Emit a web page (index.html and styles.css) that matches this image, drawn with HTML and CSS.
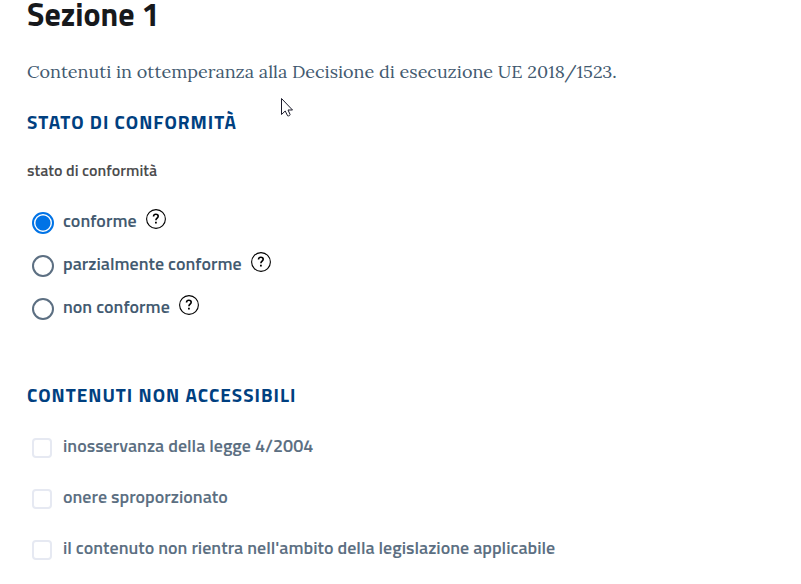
FILE: index.html
```html
<!DOCTYPE html>
<html lang="it">
<head>
<meta charset="utf-8">
<meta name="viewport" content="width=device-width, initial-scale=1">
<title>Sezione 1</title>
<link rel="stylesheet" href="styles.css">
</head>
<body>
<svg class="icon-defs" aria-hidden="true">
  <symbol id="help" viewBox="0 0 20 20">
    <circle cx="10" cy="10" r="9.400" fill="none" stroke="#000" stroke-width="1.100"/>
    <path d="M7.500 7.500C7.600 6 8.500 5.300 9.800 5.300c1.400 0 2.400.8 2.400 2 0 1.800-2.300 1.900-2.300 4" fill="none" stroke="#000" stroke-width="1.600"/>
    <path d="M9 12.700h1.800v1.800H9z"/>
  </symbol>
</svg>
<main class="section">
  <h1 class="title">Sezione 1</h1>
  <p class="intro">Contenuti in ottemperanza alla Decisione di esecuzione UE 2018/1523.</p>
  <h2 class="heading">Stato di conformità</h2>
  <fieldset class="group">
    <legend class="legend">stato di conformità</legend>
    <div class="option">
      <input class="radio" type="radio" name="stato" id="conforme" checked>
      <label for="conforme">conforme</label>
      <button class="help" type="button" aria-label="Aiuto"><svg><use href="#help"/></svg></button>
    </div>
    <div class="option">
      <input class="radio" type="radio" name="stato" id="parziale">
      <label for="parziale">parzialmente conforme</label>
      <button class="help" type="button" aria-label="Aiuto"><svg><use href="#help"/></svg></button>
    </div>
    <div class="option">
      <input class="radio" type="radio" name="stato" id="non-conforme">
      <label for="non-conforme">non conforme</label>
      <button class="help" type="button" aria-label="Aiuto"><svg><use href="#help"/></svg></button>
    </div>
  </fieldset>
  <h2 class="heading heading-spaced">Contenuti non accessibili</h2>
  <div class="checks">
    <div class="option option-disabled">
      <input class="checkbox" type="checkbox" id="inosservanza" disabled>
      <label for="inosservanza">inosservanza della legge 4/2004</label>
    </div>
    <div class="option option-disabled">
      <input class="checkbox" type="checkbox" id="onere" disabled>
      <label for="onere">onere sproporzionato</label>
    </div>
    <div class="option option-disabled">
      <input class="checkbox" type="checkbox" id="ambito" disabled>
      <label for="ambito">il contenuto non rientra nell'ambito della legislazione applicabile</label>
    </div>
  </div>
</main>
<svg class="pointer" viewBox="0 0 13 20" aria-hidden="true">
  <path d="M1.500 1.500v16l3.700-3.500 2.400 4.800c1.400.4 2.400-.3 2.500-1.300L8 13h4.500z" fill="#fff" stroke="#1b1b2b"/>
</svg>
</body>
</html>
```

FILE: styles.css
```css
body {
  margin: 0;
  background: #fff;
  color: #435a70;
  font: 600 18px/24px "Titillium Web", Roboto, sans-serif;
}

.icon-defs {
  position: absolute;
  width: 0;
  height: 0;
}

.section {
  padding: 0 27px;
}

.title {
  margin: 0;
  color: #17191c;
  font-size: 32px;
  font-weight: 700;
  line-height: 28px;
}

.intro {
  margin: 30px 0 24px;
  font: 400 18px/28px Lora, "Liberation Serif", serif;
}

.heading {
  margin: 0 0 24px;
  color: #004080;
  font-size: 19px;
  font-weight: 700;
  line-height: 24px;
  letter-spacing: 1px;
  text-transform: uppercase;
}

.heading-spaced {
  margin: 54px 0 14px;
}

.group {
  margin: 0;
  padding: 0;
  border: 0;
}

.legend {
  margin-bottom: 18px;
  padding: 0;
  color: #4c4c4d;
  font-size: 16px;
}

.option {
  display: flex;
  align-items: center;
  min-height: 43px;
  padding-left: 5px;
}

.option label {
  padding-bottom: 2px;
}

.option-disabled {
  min-height: 51px;
  color: #5c6f82;
}

.radio,
.checkbox {
  appearance: none;
  flex: none;
  box-sizing: border-box;
  margin: 3px 9px 0 0;
  background: #fff;
}

.radio {
  width: 22px;
  height: 22px;
  border: 2px solid #5c6f82;
  border-radius: 50%;
}

.radio:checked {
  border-color: #0073e6;
  background: radial-gradient(circle, #0073e6 7px, #fff 8px);
}

.checkbox {
  width: 20px;
  height: 20px;
  margin-right: 11px;
  border: 2px solid #e6e9f2;
  border-radius: 4px;
}

.help {
  width: 20px;
  height: 20px;
  margin: 0 0 6px 9px;
  padding: 0;
  border: 0;
  background: none;
}

.help svg {
  display: block;
  width: 20px;
  height: 20px;
}

.pointer {
  position: absolute;
  left: 280px;
  top: 97px;
  width: 13px;
  height: 20px;
}
```
